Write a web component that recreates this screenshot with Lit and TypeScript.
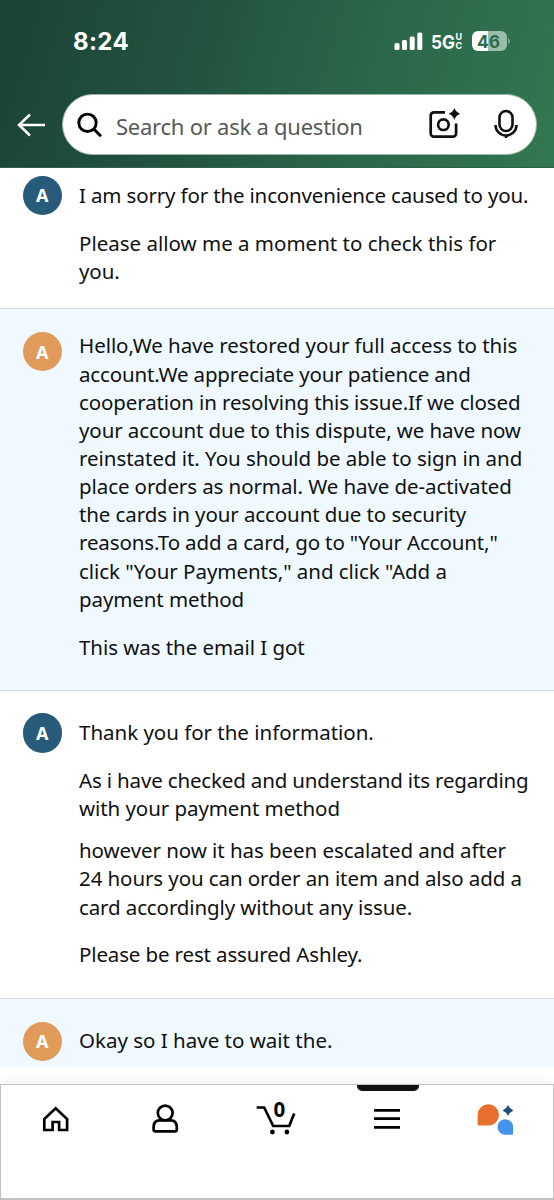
import { LitElement, html, css, svg } from "lit";
import { customElement, property } from "lit/decorators.js";

interface Line { text: string; tracking: number }
interface Message { from: string; tone: string; paragraphs: Line[][] }

const l = (text: string, tracking = 0): Line => ({ text, tracking });

const MESSAGES: Message[] = [
  { from: "A", tone: "agent first", paragraphs: [
    [l("I am sorry for the inconvenience caused to you.", -0.155)],
    [l("Please allow me a moment to check this for"), l("you.", -0.1)],
  ] },
  { from: "A", tone: "customer raised", paragraphs: [
    [l("Hello,We have restored your full access to this", -0.055), l("account.We appreciate your patience and", -0.145),
     l("cooperation in resolving this issue.If we closed", -0.12), l("your account due to this dispute, we have now", -0.11),
     l("reinstated it. You should be able to sign in and", -0.04), l("place orders as normal. We have de-activated", -0.09),
     l("the cards in your account due to security", -0.1), l('reasons.To add a card, go to "Your Account,"', -0.135),
     l('click "Your Payments," and click "Add a', -0.04), l("payment method", -0.1)],
    [l("This was the email I got", -0.06)],
  ] },
  { from: "A", tone: "agent long", paragraphs: [
    [l("Thank you for the information.", -0.02)],
    [l("As i have checked and understand its regarding", -0.16), l("with your payment method", -0.07)],
    [l("however now it has been escalated and after", -0.06), l("24 hours you can order an item and also add a", -0.09), l("card accordingly without any issue.", -0.115)],
    [l("Please be rest assured Ashley.", -0.14)],
  ] },
  { from: "A", tone: "customer", paragraphs: [[l("Okay so I have to wait the.", 0)]] },
];

@customElement("top-header")
class TopHeader extends LitElement {
  static styles = css`
    :host { display: block; height: 168px; box-sizing: border-box; color: #fff;
      background: linear-gradient(107deg, #1b4236 0%, #225440 36%, #2b674a 66%, #33774f 100%);
      border-bottom: 1px solid #2d6149; }
    .status { height: 94px; box-sizing: border-box; padding: 26px 44px 0 73px; display: flex; align-items: flex-start; }
    .time { font: 700 24px/31px Inter, sans-serif; letter-spacing: 0.35px; flex: 1; }
    .status svg { display: block; }
    .bar { display: flex; align-items: center; padding: 0 17px 0 17px; gap: 17px; height: 61px; }
    .back { display: block; flex: none; width: 28px; }
    .search { flex: 1; height: 61px; box-sizing: border-box; border: 1.5px solid #9db5a8; border-radius: 31px; background: #fff;
      display: flex; align-items: center; padding: 0 17px 0 13px; color: #000; }
    .hint { flex: 1; margin-left: 13px; padding-top: 2px; font: 400 22px/30px "Noto Sans", sans-serif; letter-spacing: -0.24px; color: #565959; white-space: nowrap; }
    .camera { margin-right: 33px; }
    .search svg { display: block; flex: none; }
  `;
  render() {
    return html`
      <div class="status">
        <span class="time">8:24</span>
        <svg width="118" height="30" viewBox="392 26 118 30">
          <g fill="#fff"><rect x="394.5" y="43" width="5" height="7" rx="1.5"/><rect x="402" y="40" width="5" height="10" rx="1.5"/><rect x="409.7" y="36.5" width="5" height="13.5" rx="1.5"/><rect x="417.3" y="32.5" width="5" height="17.5" rx="1.5"/></g>
          <g fill="#fff" font-family="Inter, sans-serif" font-weight="700"><text x="431" y="49" font-size="19" textLength="24" lengthAdjust="spacingAndGlyphs">5G</text><text x="455.600" y="40.400" font-size="9">U</text><text x="455.600" y="49.300" font-size="9">C</text></g>
          <path d="M478 31h10v20h-10a6 6 0 0 1-6-6v-8a6 6 0 0 1 6-6z" fill="#fff"/>
          <path d="M488 31h13a6 6 0 0 1 6 6v8a6 6 0 0 1-6 6h-13z" fill="#9abcaa"/>
          <path d="M508.300 38q1.500 1 1.500 3t-1.500 3z" fill="#9abcaa"/>
          <text x="477" y="47.600" font-family="Inter, sans-serif" font-weight="700" font-size="18" fill="#2d6a4c" textLength="23" lengthAdjust="spacingAndGlyphs">46</text>
        </svg>
      </div>
      <div class="bar">
        <svg class="back" width="28" height="24" viewBox="17 113 28 24" fill="none" stroke="#fff" stroke-width="2.500"><path d="M45 125H19M30 114.500L19 125l11 10.500"/></svg>
        <div class="search">
          <svg width="27" height="28" viewBox="76 111 27 28" fill="none" stroke="#000" stroke-width="2.900"><circle cx="87.500" cy="122.800" r="8.700"/><path d="M93.700 129l7.300 7.200"/></svg>
          <span class="hint">Search or ask a question</span>
          <svg class="camera" width="33" height="34" viewBox="428 107.500 33 34" fill="none" stroke="#0f1111" stroke-width="2.700" overflow="visible"><path d="M445 111.800h-11a3.300 3.300 0 0 0-3.300 3.300v17.800a3.300 3.300 0 0 0 3.300 3.300h18.800a3.300 3.300 0 0 0 3.300-3.300V123"/><circle cx="443.400" cy="124.200" r="5.300"/><path d="M454.400 107.500q1.500 4.200 5.800 5.800q-4.300 1.600-5.800 5.900q-1.500-4.300-5.800-5.900q4.300-1.600 5.800-5.800z" fill="#0f1111" stroke="none"/></svg>
          <svg width="25" height="32" viewBox="494 109 25 32" fill="none" stroke="#0f1111" stroke-width="2.600"><rect x="499.500" y="111" width="13" height="20" rx="6.500"/><path d="M495.500 125a10.500 10.500 0 0 0 21 0M506 135v3"/></svg>
        </div>
      </div>`;
  }
}

@customElement("chat-message")
class ChatMessage extends LitElement {
  @property({ attribute: false }) message!: Message;
  static styles = css`
    :host { display: block; flex: none; }
    .row { display: flex; gap: 17px; padding: 23px 0 29.500px 22.500px; border-bottom: 1.500px solid #d5dbdf; background: #fff; }
    .customer { background: #f0f9ff; }
    .first { padding-top: 7.500px; padding-bottom: 23.400px; }
    .long { padding-top: 22.600px; padding-bottom: 28.900px; }
    .avatar { flex: none; width: 39.500px; height: 39.500px; border-radius: 50%; background: #275b79; color: #fff;
      display: flex; align-items: center; justify-content: center; font: 700 18px/22px "Noto Sans", sans-serif; }
    .customer .avatar { background: #e09b5b; }
    .body { margin-top: 4.700px; font: 400 20.500px/28.150px "Noto Sans", sans-serif; color: #0f1111; }
    .first .body { margin-top: 5.200px; }
    .first { padding-bottom: 22.900px; }
    .raised { padding-bottom: 28.800px; }
    .raised .body { margin-top: -0.500px; }
    .p { margin: 0 0 19.800px; }
    .p:last-child { margin-bottom: 0; }
    .agent .p:nth-child(2):not(:last-child) { margin-bottom: 14px; }
    .line { display: block; white-space: nowrap; }
  `;
  render() {
    const m = this.message;
    return html`<div class="row ${m.tone}"><span class="avatar">${m.from}</span><div class="body">
      ${m.paragraphs.map((p) => html`<p class="p">${p.map((x) => html`<span class="line" style="letter-spacing:${x.tracking}px">${x.text}</span>`)}</p>`)}
    </div></div>`;
  }
}

const ICONS = [
  svg`<path d="M44.100 1119L55.500 1108.300l11.400 10.700v11H58.900v-8h-6.500v8h-8.300z"/>`,
  svg`<circle cx="165.400" cy="1113" r="7.400"/><path d="M160 1120.300h10.800q6.200 0 6.200 7v2.200q0 1.800-1.800 1.800h-19.600q-1.800 0-1.800-1.800v-2.200q0-7 6.200-7z"/>`,
  svg`<path d="M257.300 1107.500h7.500l9 18.500h16l5-12.500"/><g fill="#000" stroke="none"><circle cx="273" cy="1132" r="2.400"/><circle cx="287.500" cy="1132" r="2.400"/><text x="280" y="1117.300" text-anchor="middle" font-family="Noto Sans, sans-serif" font-size="20.500" font-weight="700">0</text></g>`,
  svg`<path d="M374 1110.300h26M374 1118.700h26M374 1127.300h26"/>`,
  svg`<g stroke="none"><path d="M478 1114.600a10.700 10.700 0 1 1 10.700 11h-9.200q-1.500 0-1.500-1.500z" fill="#e96f2c"/><path d="M513.500 1126.800a7.800 7.800 0 1 0-7.800 8h6.800q1 0 1-1z" fill="#4593ec"/><path d="M508.400 1105q1.600 3.900 5.400 5.500q-3.800 1.600-5.400 5.500q-1.600-3.900-5.400-5.500q3.800-1.600 5.400-5.500z" fill="#1e4b7c"/></g>`,
];

@customElement("tab-bar")
class TabBar extends LitElement {
  static styles = css`
    :host { display: block; height: 116px; box-sizing: border-box; background: #fff; border: 1.500px solid #bfc2c7; border-bottom-width: 2px; box-shadow: 0 -4px 9px rgba(0,0,0,.05); }
    .tabs { display: grid; grid-template-columns: repeat(5, 110.400px); padding-left: 0.400px; }
    .tab { height: 60px; display: flex; flex-direction: column; align-items: center; }
    .marker { width: 62px; height: 6px; border-radius: 0 0 5px 5px; }
    .active .marker { background: #0f1111; }
    svg { display: block; margin-top: 9px; overflow: visible; }
  `;
  render() {
    return html`<div class="tabs">${ICONS.map((icon, i) => html`<div class="tab ${i === 3 ? "active" : ""}"><i class="marker"></i>
      <svg width="46" height="40" viewBox="${33.8 + i * 110.4} 1100 46 40" fill="none" stroke="#000" stroke-width="2.700">${icon}</svg></div>`)}</div>`;
  }
}

@customElement("app-root")
class AppRoot extends LitElement {
  static styles = css`
    :host { display: flex; flex-direction: column; width: 554px; height: 1200px; overflow: hidden; background: #fff; }
    .chat { height: 899px; overflow: hidden; flex: none; display: flex; flex-direction: column; }
    .nav { margin-top: 17px; flex: none; }
    .head { flex: none; }
  `;
  render() {
    return html`<top-header class="head"></top-header>
      <main class="chat">${MESSAGES.map((m) => html`<chat-message .message=${m}></chat-message>`)}</main>
      <tab-bar class="nav"></tab-bar>`;
  }
}
